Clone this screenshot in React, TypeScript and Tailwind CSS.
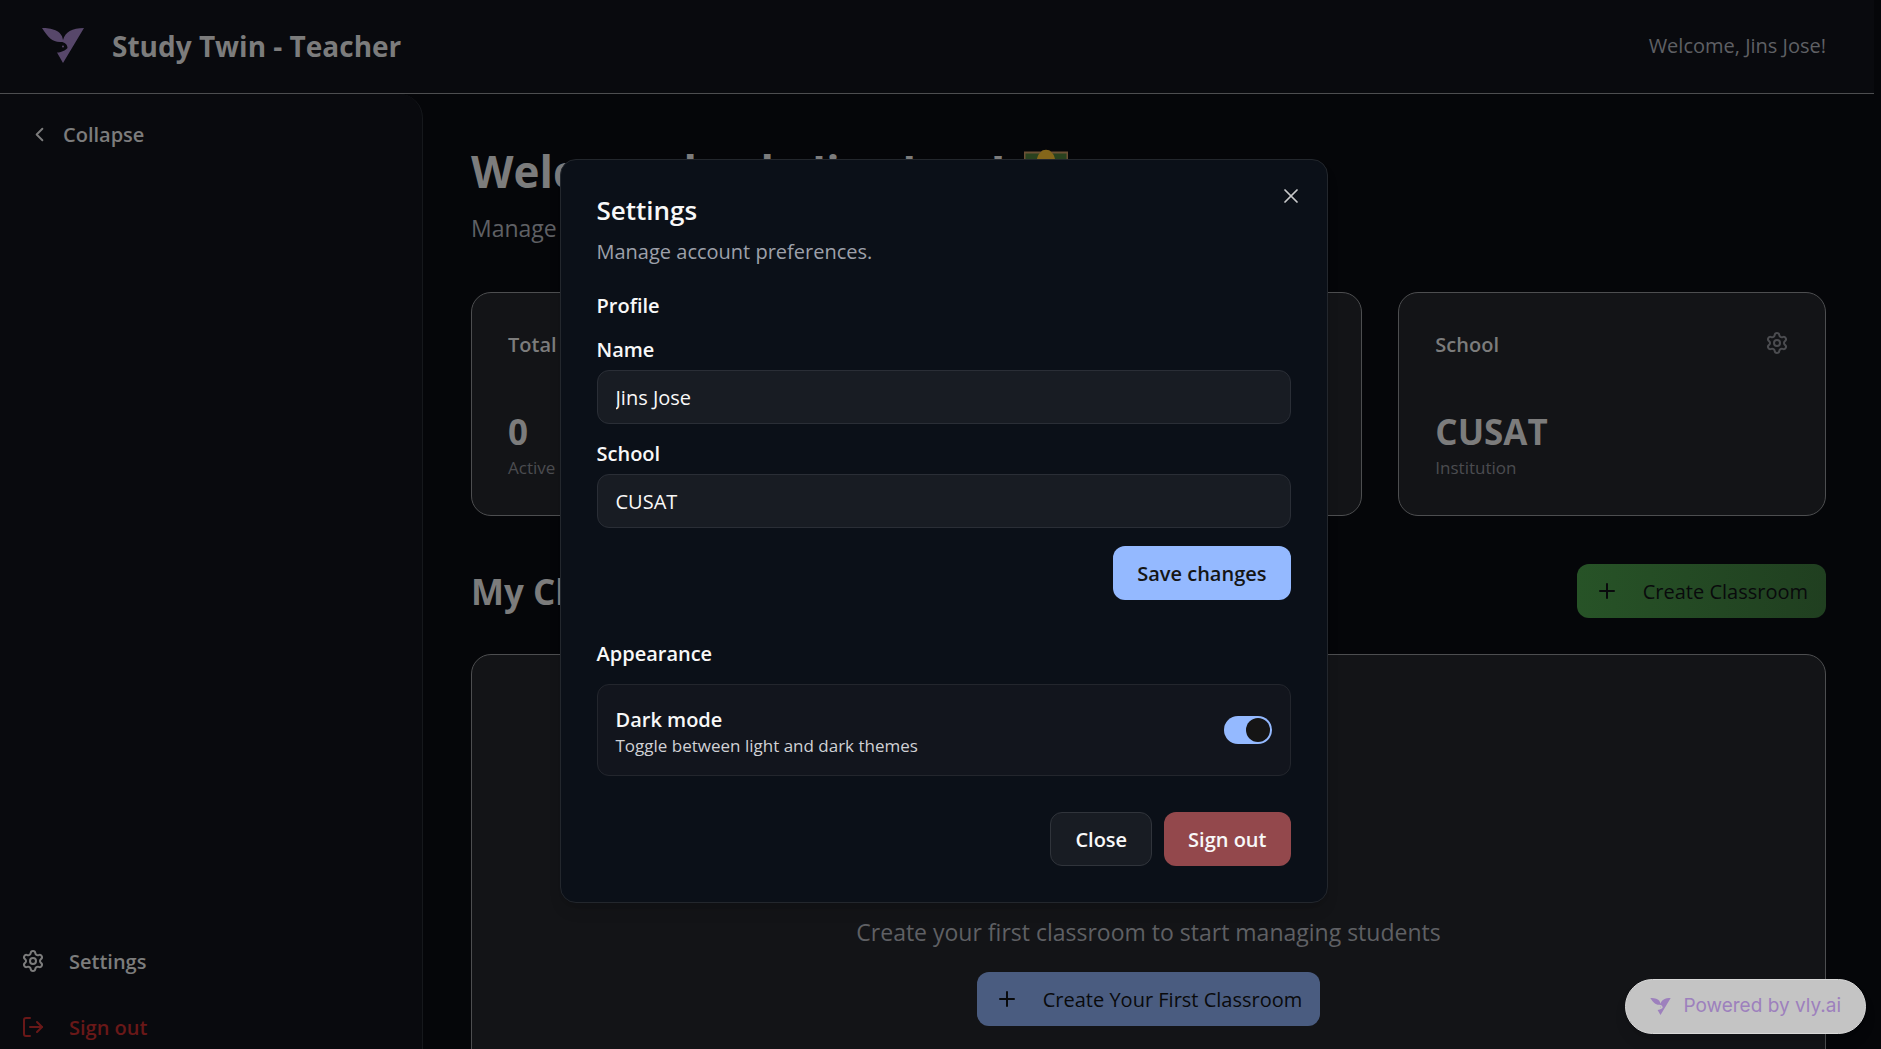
import React from "react";
import { ChevronLeft, LogOut, Plus, Settings, X } from "lucide-react";

function Bird({ className }: { className: string }) {
  return (
    <svg viewBox="0 0 42 35" className={className} fill="currentColor" aria-hidden="true">
      <path
        fillRule="evenodd"
        d="M0 0C9 0 20 2 21 12C23 4 30 0 42 0L21 35L15 24.500C19 24.500 23 22.500 24.500 21L25.500 20C25.500 16 22 13.500 18 14C10 14 6 9 0 0ZM20 18.500a1 1 0 1 0 2 0a1 1 0 1 0 -2 0Z"
      />
    </svg>
  );
}

function TeacherEmoji() {
  return (
    <svg viewBox="0 0 44 44" className="size-11" role="img" aria-label="teacher">
      <rect x="0.500" y="3.500" width="43" height="32" fill="#29421f" stroke="#6b5035" strokeWidth="2" />
      <path d="M12 20C12 10 14 5 17 3C18 0 26 0 27 3C30 5 32 10 32 20Z" fill="#84661a" />
      <circle cx="22" cy="19" r="9" fill="#8f7426" />
      <path d="M8 44C8 34 14 30 22 30S36 34 36 44Z" fill="#3d4a63" />
    </svg>
  );
}

function StatCard({ title, value, note, icon }: { title: string; value: string; note: string; icon?: React.ReactNode }) {
  return (
    <section className="h-56 rounded-[20px] border border-[#4d4e50] bg-[#131417] px-9 pt-9">
      <div className="flex h-8 items-start justify-between">
        <h3 className="text-[20px] leading-8 font-semibold text-[#7c7c7c]">{title}</h3>
        <span className="pt-0.5">{icon}</span>
      </div>
      <p className="mt-[51px] text-[35px] leading-10 font-bold text-[#7c7c7c]">{value}</p>
      <p className="mt-1 text-[17px] leading-6 text-[#4b4c50]">{note}</p>
    </section>
  );
}

function Field({ id, label, value }: { id: string; label: string; value: string }) {
  return (
    <div className="flex flex-col gap-2">
      <label htmlFor={id} className="text-[20px] leading-6 font-semibold">
        {label}
      </label>
      <input
        id={id}
        defaultValue={value}
        className="h-[54px] w-full rounded-xl border border-[#2a2e36] bg-[#181c23] px-[18px] pt-0.5 text-[20px] outline-none"
      />
    </div>
  );
}

function SettingsDialog() {
  return (
    <div
      role="dialog"
      aria-modal="true"
      aria-labelledby="dialog-title"
      className="relative w-[768px] max-w-full rounded-2xl border border-[#23272d] bg-[#0b1018] p-9 text-[#f8f8f8] shadow-lg"
    >
      <button aria-label="Close dialog" className="absolute top-6 right-6 text-[#c8c9cb]">
        <X size={24} strokeWidth={1.75} />
      </button>
      <h2 id="dialog-title" className="text-[26px] leading-7 font-semibold">
        Settings
      </h2>
      <p className="mt-3.5 text-[20px] leading-7 text-[#9da0aa]">Manage account preferences.</p>

      <h3 className="mt-7 text-[20px] leading-6 font-semibold">Profile</h3>
      <div className="mt-5 flex flex-col gap-[18px]">
        <Field id="name" label="Name" value="Jins Jose" />
        <Field id="school" label="School" value="CUSAT" />
        <button className="h-[54px] self-end rounded-xl bg-[#94b9ff] px-6 pt-0.5 text-[20px] font-semibold text-[#151515]">
          Save changes
        </button>
      </div>

      <h3 className="mt-10 text-[20px] leading-7 font-semibold">Appearance</h3>
      <div className="mt-4 flex h-[92px] items-center justify-between rounded-xl border border-[#23262d] bg-[#12151d] px-[18px]">
        <label htmlFor="dark" className="pt-1">
          <span className="block text-[20px] leading-7 font-semibold">Dark mode</span>
          <span className="block text-[17px] leading-6 text-[#d0d1d5]">Toggle between light and dark themes</span>
        </label>
        <span className="relative flex">
          <input
            id="dark"
            type="checkbox"
            role="switch"
            defaultChecked
            className="peer h-7 w-12 appearance-none rounded-full bg-[#94b9ff]"
          />
          <span className="pointer-events-none absolute top-0.5 right-0.5 size-6 rounded-full bg-[#151515]" />
        </span>
      </div>

      <div className="mt-9 flex justify-end gap-3">
        <button className="h-[54px] rounded-xl border border-[#30343b] bg-[#181c23] px-6 pt-0.5 text-[20px] font-semibold">
          Close
        </button>
        <button className="h-[54px] rounded-xl bg-[#93484c] px-6 pt-0.5 text-[20px] font-semibold">Sign out</button>
      </div>
    </div>
  );
}

export default function App() {
  return (
    <div className="relative h-screen overflow-hidden bg-[#050609] font-['Open_Sans','Noto_Sans',sans-serif]">
      <div className="mr-[7px] flex h-full flex-col">
        <header className="flex h-[94px] shrink-0 items-center justify-between border-b border-[#4d4e50] bg-[#090a0e] pr-12 pb-0.5 pl-[42px]">
          <div className="flex items-center gap-7">
            <Bird className="h-[35px] w-[42px] text-[#57476a]" />
            <h1 className="text-[28px] font-bold text-[#7c7c7c]">Study Twin - Teacher</h1>
          </div>
          <p className="text-[20px] text-[#5f6064]">Welcome, Jins Jose!</p>
        </header>

        <div className="flex min-h-0 flex-1">
          <aside className="flex w-[423px] shrink-0 flex-col justify-between rounded-tr-3xl border-r border-[#16181c] bg-[#090a0e] px-5 pt-6">
            <button className="flex h-8 items-center gap-3 self-start pl-2 text-[20px] font-semibold text-[#7c7c7c]">
              <ChevronLeft size={23} />
              <span className="pt-0.5">Collapse</span>
            </button>
            <nav className="flex flex-col gap-[34px] pb-1.5 pl-px text-[20px] font-semibold">
              <a href="#settings" className="flex h-8 items-center gap-6 text-[#7c7c7c]">
                <Settings size={24} />
                <span className="pt-0.5">Settings</span>
              </a>
              <a href="#signout" className="flex h-8 items-center gap-6 text-[#691818]">
                <LogOut size={24} />
                <span className="pt-0.5">Sign out</span>
              </a>
            </nav>
          </aside>

          <main className="min-w-0 flex-1 overflow-hidden px-12 pt-12">
            <h2 className="flex items-center gap-5 text-[44px] leading-[58px] font-bold text-[#7c7c7c]">
              Welcome back, Jins Jose! <TeacherEmoji />
            </h2>
            <p className="mt-3 text-[23px] leading-8 text-[#5f6064]">Manage your classrooms and students</p>

            <div className="mt-12 grid grid-cols-3 gap-9">
              <StatCard title="Total Classrooms" value="0" note="Active classrooms" />
              <StatCard title="Total Students" value="0" note="Enrolled students" />
              <StatCard
                title="School"
                value="CUSAT"
                note="Institution"
                icon={<Settings size={24} className="text-[#4b4c50]" />}
              />
            </div>

            <div className="mt-12 flex h-[54px] items-center justify-between">
              <h2 className="pt-0.5 text-[35px] font-bold text-[#7c7c7c]">My Classrooms</h2>
              <button className="flex h-[54px] items-center gap-6 rounded-xl bg-linear-to-r from-[#275327] to-[#203f20] px-[18px] text-[20px] font-medium text-[#090a0c]">
                <Plus size={24} />
                <span className="pt-0.5">Create Classroom</span>
              </button>
            </div>

            <section className="mt-9 flex h-[480px] flex-col items-center rounded-[20px] border border-[#4d4e50] bg-[#131417] pt-[261px]">
              <p className="text-[23px] leading-8 text-[#5f6064]">Create your first classroom to start managing students</p>
              <button className="mt-6 flex h-[54px] items-center gap-6 rounded-xl bg-[#4a5c80] px-[18px] text-[20px] font-medium text-[#090a0c]">
                <Plus size={24} />
                <span className="pt-0.5">Create Your First Classroom</span>
              </button>
            </section>
          </main>
        </div>
      </div>

      <div className="absolute inset-0 flex items-center justify-center pt-3 pl-1.5">
        <SettingsDialog />
      </div>

      <a
        href="#vly"
        className="absolute right-[15px] bottom-[15px] flex h-[55px] items-center gap-3 rounded-full border border-[#d8d8d8] bg-[#c4c4c4] px-6 font-['Inter',sans-serif] text-[19px] text-[#9d80bd] shadow-lg"
      >
        <Bird className="h-[17px] w-[21px]" />
        Powered by vly.ai
      </a>
    </div>
  );
}
